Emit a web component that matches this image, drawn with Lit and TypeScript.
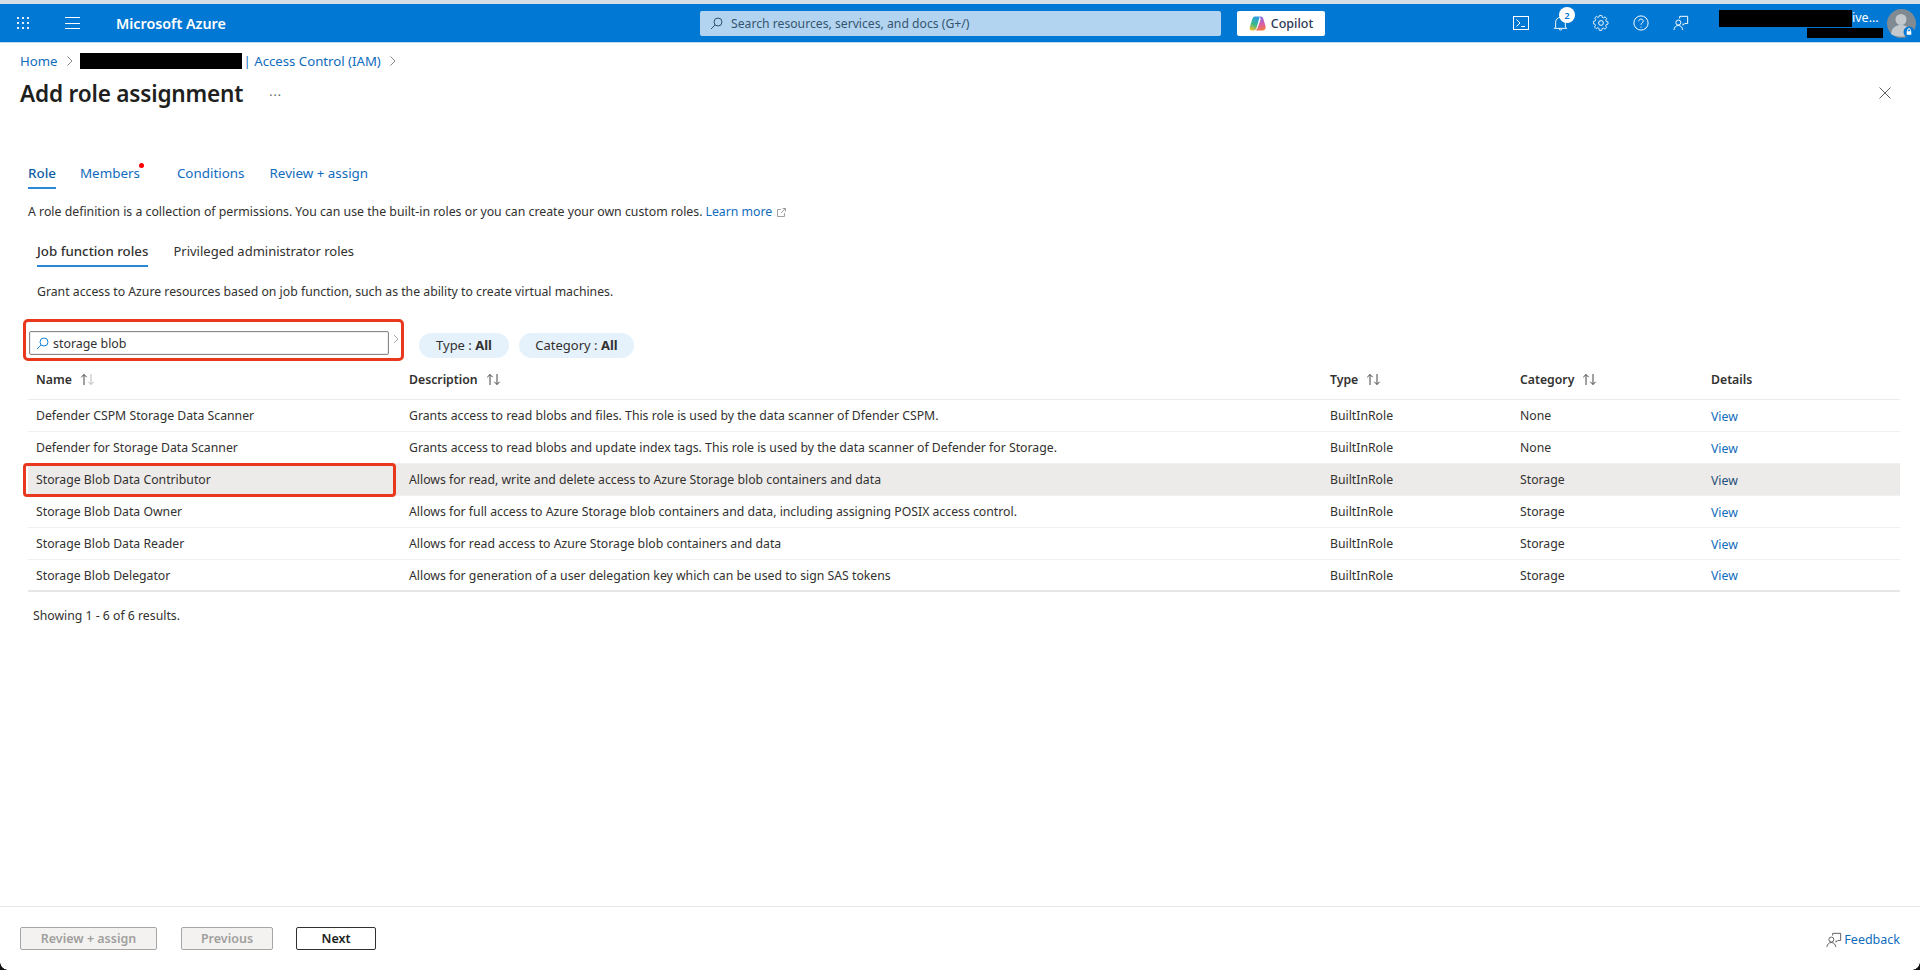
import { LitElement, html, css } from "lit";
import { customElement } from "lit/decorators.js";

const rows = [
  ["Defender CSPM Storage Data Scanner", "Grants access to read blobs and files. This role is used by the data scanner of Dfender CSPM.", "BuiltInRole", "None"],
  ["Defender for Storage Data Scanner", "Grants access to read blobs and update index tags. This role is used by the data scanner of Defender for Storage.", "BuiltInRole", "None"],
  ["Storage Blob Data Contributor", "Allows for read, write and delete access to Azure Storage blob containers and data", "BuiltInRole", "Storage"],
  ["Storage Blob Data Owner", "Allows for full access to Azure Storage blob containers and data, including assigning POSIX access control.", "BuiltInRole", "Storage"],
  ["Storage Blob Data Reader", "Allows for read access to Azure Storage blob containers and data", "BuiltInRole", "Storage"],
  ["Storage Blob Delegator", "Allows for generation of a user delegation key which can be used to sign SAS tokens", "BuiltInRole", "Storage"],
];

const feedbackIcon = (c: string, s = 18) => html`<svg width=${s} height=${s} viewBox="0 0 18 18" fill="none" stroke=${c} stroke-width="1.1">
  <path d="M7.5 4V1.5h9v8h-3.2l-2 2V9.6"/><circle cx="6" cy="8.5" r="2.8"/><path d="M1 16.8c.4-3 2.4-5 5-5s4.6 2 5 5"/></svg>`;

const sortIcon = (light: boolean) => html`<svg class="sort" width="16" height="13" viewBox="0 0 16 13" fill="none" stroke-width="1">
  <path d="M4 12V1.5M1.3 4.2 4 1.5l2.7 2.7" stroke="#444"/>
  <path d="M11 1v10.5M8.3 8.8l2.7 2.7 2.7-2.7" stroke=${light ? "#bbb" : "#444"}/></svg>`;

const chevron = html`<svg class="chev" width="8" height="12" viewBox="0 0 8 12" fill="none" stroke="#8a8886" stroke-width="1"><path d="M1.5 1.5 6 6l-4.5 4.5"/></svg>`;

@customElement("app-root")
export class AppRoot extends LitElement {
  static styles = css`
    :host { display: block; height: 970px; width: 1920px; font-family: "Noto Sans", "Liberation Sans", sans-serif; color: #323130; font-size: 12.25px; overflow: hidden; }
    * { box-sizing: border-box; }
    .page { position: relative; height: 970px; display: flex; flex-direction: column; background: #fff; }
    .strip { height: 4px; background: #d5dde5; }
    .top { height: 39px; background: #0078d4; display: flex; align-items: center; color: #fff; border-bottom: 1px solid #bcd9f2; }
    .waffle { margin-left: 17px; width: 12px; height: 12px; display: grid; grid-template-columns: repeat(3, 2px); gap: 3px; }
    .waffle i { background: #e4f0fb; width: 2px; height: 2px; }
    .burger { margin-left: 36px; width: 15px; height: 12px; display: flex; flex-direction: column; justify-content: space-between; }
    .burger i { display: block; height: 1px; background: #fff; }
    .brand { margin-left: 36px; font-size: 14.3px; font-weight: 600; width: 584px; }
    .search { width: 521px; height: 25px; background: #b3d4f0; border-radius: 2px; display: flex; align-items: center; gap: 8px; padding-left: 10px; color: #33546f; font-size: 12.2px; }
    .copilot { margin-left: 16px; width: 88px; height: 25px; background: #fff; border-radius: 2px; display: flex; align-items: center; justify-content: center; gap: 5px; color: #2b3a55; font-size: 12.5px; font-weight: 500; }
    .tools { margin-left: 186px; display: flex; gap: 21px; align-items: center; }
    .tool { width: 19px; height: 20px; position: relative; display: flex; align-items: center; justify-content: center; }
    .badge { position: absolute; top: -6px; right: -5px; width: 16px; height: 16px; border-radius: 50%; background: #fff; color: #0078d4; font-size: 9.5px; font-weight: 600; display: flex; align-items: center; justify-content: center; }
    .acct { position: absolute; left: 1719px; top: 10px; width: 164px; height: 28px; }
    .redact { background: #000; position: absolute; }
    .r1 { left: 0; top: 0; width: 133px; height: 17px; }
    .r2 { left: 88px; top: 18px; width: 76px; height: 10px; }
    .ive { position: absolute; left: 133px; top: 0; font-size: 12.5px; line-height: 16px; }
    .avatar { position: absolute; left: 1887px; top: 9px; }
    main { flex: 1; padding: 8px 20px 0 20px; display: flex; flex-direction: column; position: relative; }
    .crumb { height: 20px; display: flex; align-items: center; font-size: 13.2px; color: #0f6cbd; }
    .crumb .chev { margin: 0 6px 0 8px; }
    .crumb .black { width: 162px; height: 16px; background: #000; margin-right: 2px; }
    .titlebar { height: 32px; margin-top: 6px; display: flex; align-items: center; position: relative; }
    h1 { margin: 0; font-size: 22.6px; font-weight: 600; color: #201f1e; letter-spacing: -.2px; }
    .more { margin-left: 26px; color: #605e5c; font-size: 12px; letter-spacing: 1px; line-height: 12px; margin-top: -2px; }
    .close { margin-left: auto; margin-right: 9px; }
    .body { padding: 0 0 0 8px; }
    .tabs { margin-top: 53px; display: flex; height: 27px; font-size: 13.4px; color: #0f6cbd; }
    .tab { position: relative; height: 27px; padding-top: 1px; line-height: 20px; }
    .tab.on { font-weight: 500; color: #0f5fa8; }
    .tab.on::after { content: ""; position: absolute; left: 0; right: 0; bottom: 0; height: 2px; background: #2b88d8; }
    .t1 { margin-right: 24px; } .t2 { margin-right: 37px; } .t3 { margin-right: 25px; }
    .dot { position: absolute; left: 59px; top: 1px; width: 5px; height: 5px; background: #f00; border-radius: 50%; }
    .desc { margin-top: 13px; height: 20px; line-height: 20px; display: flex; align-items: center; font-size: 12.3px; color: #323130; white-space: nowrap; }
    .desc a, .view { color: #0f6cbd; }
    .desc a { margin-left: 3px; }
    .desc svg { margin-left: 5px; }
    .sub { margin: 19px 0 0 9px; display: flex; height: 26px; gap: 25px; font-size: 13px; line-height: 20px; }
    .sub .on { font-weight: 500; font-size: 13.3px; color: #323130; position: relative; height: 26px; }
    .sub .on::after { content: ""; position: absolute; left: 0; right: 0; bottom: 0; height: 2px; background: #2b88d8; }
    .grant { margin: 15px 0 0 9px; height: 20px; line-height: 20px; }
    .filters { margin: 17px 0 0 -5px; height: 42px; display: flex; align-items: center; gap: 10px; }
    .searchwrap { width: 381px; height: 42px; border: 3px solid #e8391f; border-radius: 5px; padding: 9px 0 0 3px; display: flex; position: relative; }
    .inp { width: 360px; height: 24px; border: 1px solid #8a8886; border-radius: 2px; display: flex; align-items: center; padding-left: 6px; gap: 4px; font-size: 12.4px; box-shadow: inset 0 0 0 1px #eee; }
    .ovf { position: absolute; right: 2px; top: 12px; }
    .pill { height: 25px; border-radius: 13px; background: #e6f2fb; display: flex; align-items: center; justify-content: center; font-size: 13px; margin-top: 10px; }
    .pill b { font-weight: 700; }
    .p1 { width: 90px; margin-left: 5px; } .p2 { width: 115px; }
    .tbl { margin-top: 2px; }
    .row { display: grid; grid-template-columns: 373px 921px 190px 191px 197px; height: 32px; align-items: center; border-bottom: 1px solid #f0f0f0; position: relative; }
    .row > span { padding-left: 8px; white-space: nowrap; display: flex; align-items: center; }
    .head { height: 37px; padding-bottom: 3px; font-weight: 600; border-bottom: 1px solid #edebe9; }
    .head .sort { margin-left: 8px; }
    .row.sel { background: #edebe9; }
    .row.last { border-bottom: 2px solid #e6e6e6; }
    .row .view { padding-top: 1px; }
    .row.sel .view { color: #1d4f7a; }
    .mark { position: absolute; left: -5px; top: -1px; width: 373px; height: 34px; border: 3px solid #e8391f; border-radius: 4px; }
    .count { margin: 14px 0 0 5px; height: 20px; line-height: 20px; }
    footer { height: 64px; border-top: 1px solid #e6e6e6; padding: 20px 20px 0 20px; display: flex; align-items: flex-start; }
    .btn { height: 23px; border-radius: 2px; border: 1px solid #a6a6a6; background: #f3f2f1; color: #a19f9d; display: flex; align-items: center; justify-content: center; font-size: 12.5px; font-weight: 600; }
    .b1 { width: 137px; } .b2 { width: 92px; margin-left: 24px; }
    .b3 { width: 80px; margin-left: 23px; background: #fff; border-color: #323130; color: #201f1e; }
    .fb { margin-left: auto; display: flex; align-items: center; gap: 2px; color: #0f6cbd; font-size: 12.5px; height: 23px; margin-top: 1px; }
    .corner { position: absolute; bottom: 0; width: 8px; height: 8px; }
    .cl { left: 0; background: radial-gradient(circle at 100% 0, transparent 7.5px, #111 8px); }
    .cr { right: 0; background: radial-gradient(circle at 0 0, transparent 7.5px, #111 8px); }
  `;

  render() {
    return html`<div class="page">
      <div class="strip"></div>
      <div class="top">
        <div class="waffle">${Array.from({ length: 9 }, () => html`<i></i>`)}</div>
        <div class="burger"><i></i><i></i><i></i></div>
        <div class="brand">Microsoft Azure</div>
        <div class="search">
          <svg width="13" height="13" viewBox="0 0 13 13" fill="none" stroke="#33546f" stroke-width="1"><circle cx="8" cy="5" r="4"/><path d="M5 8 1 12"/></svg>
          <span>Search resources, services, and docs (G+/)</span>
        </div>
        <div class="copilot">
          <svg width="17" height="15" viewBox="0 0 17 15">
            <defs>
              <linearGradient id="cpA" x1="0.6" y1="0" x2="0.3" y2="1"><stop offset="0" stop-color="#2f9be8"/><stop offset=".55" stop-color="#39b98a"/><stop offset="1" stop-color="#f2c230"/></linearGradient>
              <linearGradient id="cpB" x1="0.4" y1="0" x2="0.6" y2="1"><stop offset="0" stop-color="#7b6be6"/><stop offset=".6" stop-color="#e05fa0"/><stop offset="1" stop-color="#f0803c"/></linearGradient>
            </defs>
            <path d="M6 .5h3.500a1 1 0 0 1 1 1.300L7.500 12c-.5 1.600-1.500 2.500-3 2.500H3C1 14.500.2 13 .8 11L3.500 2.500C4 1.200 4.800.5 6 .5z" fill="url(#cpA)"/>
            <path d="M10 .5h1.500c1.500 0 2.300.7 2.700 2L16.500 10c.7 2.500-.5 4.500-3 4.500H7l-.5-.2c1-.5 1.700-1.300 2.100-2.600L11.500 4c.3-1.500-.2-3-1.500-3.500z" fill="url(#cpB)"/>
          </svg>
          <span>Copilot</span>
        </div>
        <div class="tools">
          <div class="tool"><svg width="16" height="14" viewBox="0 0 16 14" fill="none" stroke="#fff" stroke-width="1"><rect x=".5" y=".5" width="15" height="13"/><path d="m3.500 3.500 3.500 3.500-3.500 3.500M8 10.500h4"/></svg></div>
          <div class="tool"><svg width="15" height="17" viewBox="0 0 17 18" fill="none" stroke="#fff" stroke-width="1.100"><path d="M3 13V7.500a5.500 5.500 0 0 1 11 0V13l1.500 1.500h-14zM7 15c0 2 3 2 3 0"/></svg><span class="badge">2</span></div>
          <div class="tool"><svg width="16" height="16" viewBox="0 0 18 18" fill="none" stroke="#fff" stroke-width="1.100"><path d="M7.500 1h3l.5 2.300 1.600.7 2-1.300 2 2.100-1.200 2 .6 1.600 2.200.5v3l-2.200.5-.7 1.600 1.300 2-2.100 2-2-1.200-1.600.6-.5 2.200h-3L7 17l-1.600-.7-2 1.200-2-2 1.200-2-.6-1.600L0 11.400v-3l2.200-.6.7-1.600-1.200-2 2-2 2 1.200 1.400-.7z" transform="scale(.9) translate(.5 -.4)"/><circle cx="9" cy="9" r="2.700"/></svg></div>
          <div class="tool"><svg width="16" height="16" viewBox="0 0 18 18" fill="none" stroke="#fff" stroke-width="1.100"><circle cx="9" cy="9" r="8"/><path d="M6.500 7c0-3.200 5-3.200 5 0 0 2-2.500 2-2.500 4"/><circle cx="9" cy="13.500" r=".7" fill="#fff" stroke="none"/></svg></div>
          <div class="tool">${feedbackIcon("#fff", 16)}</div>
        </div>
        <div class="acct">
          <div class="redact r1"></div><div class="redact r2"></div>
          <span class="ive">ive...</span>
        </div>
        <svg class="avatar" width="29" height="29" viewBox="0 0 29 29">
          <circle cx="14.500" cy="14.500" r="14.500" fill="#7f8a93"/>
          <circle cx="14" cy="10.500" r="5.500" fill="#c3c9cd"/>
          <path d="M4 25c.8-6.500 5-9 10-9s9.200 2.500 10 9c-5 3.500-15 3.500-20 0z" fill="#c3c9cd"/>
          <circle cx="22" cy="23" r="5.500" fill="#0078d4"/>
          <rect x="19.700" y="22.200" width="4.600" height="3.600" fill="#fff"/>
          <path d="M20.700 22.200v-1.300a1.300 1.300 0 0 1 2.600 0v1.300" fill="none" stroke="#fff"/>
        </svg>
      </div>
      <main>
        <div class="crumb">
          <span>Home</span>${chevron}<div class="black"></div><span>| Access Control (IAM)</span>${chevron}
        </div>
        <div class="titlebar">
          <h1>Add role assignment</h1>
          <span class="more">...</span>
          <svg class="close" width="12" height="12" viewBox="0 0 12 12" stroke="#605e5c" stroke-width="1"><path d="m.5.500 11 11M11.500.500l-11 11"/></svg>
        </div>
        <div class="body">
          <div class="tabs">
            <div class="tab on t1">Role</div>
            <div class="tab t2">Members<span class="dot"></span></div>
            <div class="tab t3">Conditions</div>
            <div class="tab">Review + assign</div>
          </div>
          <div class="desc">A role definition is a collection of permissions. You can use the built-in roles or you can create your own custom roles.
            <a>Learn more</a>
            <svg width="9" height="9" viewBox="0 0 9 9" fill="none" stroke="#8a8886" stroke-width=".8"><path d="M4 1.500H.5v7h7V5M4 5l4.500-4.500M5.500.500h3v3"/></svg>
          </div>
          <div class="sub"><div class="on">Job function roles</div><div>Privileged administrator roles</div></div>
          <div class="grant">Grant access to Azure resources based on job function, such as the ability to create virtual machines.</div>
          <div class="filters">
            <div class="searchwrap">
              <div class="inp">
                <svg width="13" height="13" viewBox="0 0 13 13" fill="none" stroke="#0078d4" stroke-width=".9"><circle cx="8" cy="5" r="4"/><path d="M5 8 1 12"/></svg>
                <span>storage blob</span>
              </div>
              <svg class="ovf" width="6" height="10" viewBox="0 0 6 10" fill="none" stroke="#a6a6a6"><path d="m1 1 4 4-4 4"/></svg>
            </div>
            <div class="pill p1"><span>Type : <b>All</b></span></div>
            <div class="pill p2"><span>Category : <b>All</b></span></div>
          </div>
          <div class="tbl">
            <div class="row head">
              <span>Name${sortIcon(true)}</span><span>Description${sortIcon(false)}</span><span>Type${sortIcon(false)}</span><span>Category${sortIcon(false)}</span><span>Details</span>
            </div>
            ${rows.map((r, i) => html`<div class="row ${i === 2 ? "sel" : ""} ${i === 5 ? "last" : ""}">
              <span>${r[0]}</span><span>${r[1]}</span><span>${r[2]}</span><span>${r[3]}</span><span class="view">View</span>
              ${i === 2 ? html`<div class="mark"></div>` : ""}
            </div>`)}
          </div>
          <div class="count">Showing 1 - 6 of 6 results.</div>
        </div>
      </main>
      <footer>
        <div class="btn b1">Review + assign</div>
        <div class="btn b2">Previous</div>
        <div class="btn b3">Next</div>
        <div class="fb">${feedbackIcon("#605e5c", 16)}<span>Feedback</span></div>
      </footer>
      <div class="corner cl"></div><div class="corner cr"></div>
    </div>`;
  }
}
